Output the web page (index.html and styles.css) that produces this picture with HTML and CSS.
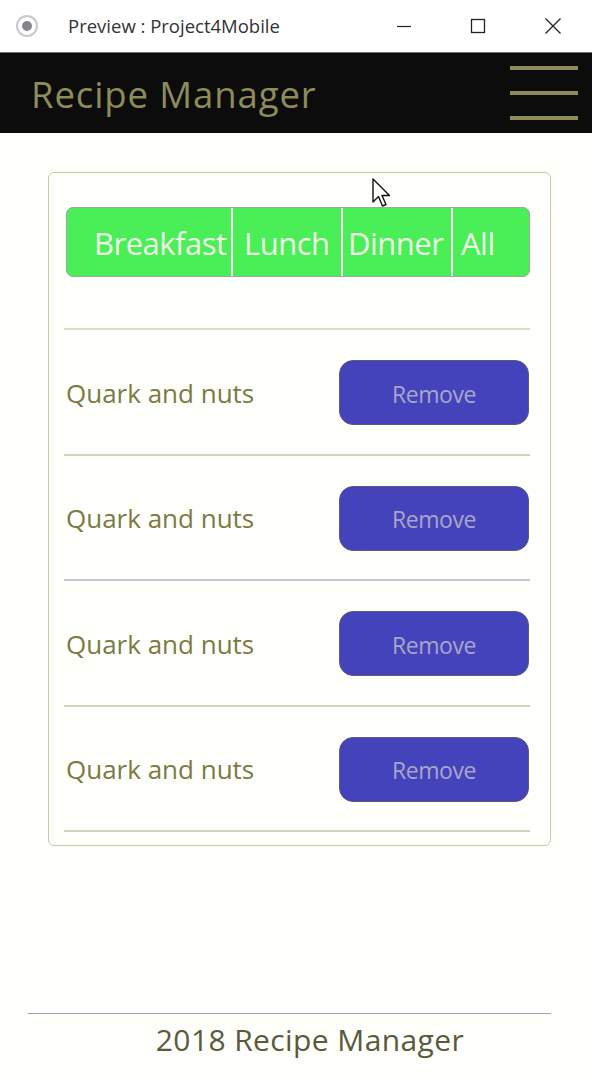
FILE: index.html
```html
<!DOCTYPE html>
<html>
<head>
<meta charset="utf-8">
<link rel="stylesheet" href="styles.css">
</head>
<body>
<div class="window">
  <div class="titlebar">
    <span class="app-icon"><span class="app-dot"></span></span>
    <span class="win-title">Preview : Project4Mobile</span>
    <div class="win-controls">
      <svg class="wc wc-min" width="16" height="16" viewBox="0 0 16 16"><path d="M1 8.5H15" stroke="#222" stroke-width="1.2"/></svg>
      <svg class="wc wc-max" width="16" height="16" viewBox="0 0 16 16"><rect x="1.5" y="1.5" width="13" height="13" fill="none" stroke="#222" stroke-width="1.3"/></svg>
      <svg class="wc wc-close" width="18" height="18" viewBox="0 0 18 18"><path d="M1.5 1.5L16.5 16.5M16.5 1.5L1.5 16.5" stroke="#222" stroke-width="1.3"/></svg>
    </div>
  </div>
  <header class="appbar">
    <h1 class="brand">Recipe Manager</h1>
    <div class="burger"><span></span><span></span><span></span></div>
  </header>
  <main class="content">
    <section class="card">
      <div class="segments">
        <div class="seg seg-breakfast">Breakfast</div>
        <div class="seg seg-lunch">Lunch</div>
        <div class="seg seg-dinner">Dinner</div>
        <div class="seg seg-all">All</div>
      </div>
      <ul class="recipes">
        <li class="recipe"><span class="recipe-name">Quark and nuts</span><button class="remove">Remove</button></li>
        <li class="recipe"><span class="recipe-name">Quark and nuts</span><button class="remove">Remove</button></li>
        <li class="recipe"><span class="recipe-name">Quark and nuts</span><button class="remove">Remove</button></li>
        <li class="recipe"><span class="recipe-name">Quark and nuts</span><button class="remove">Remove</button></li>
      </ul>
    </section>
  </main>
  <footer class="footer">
    <p class="footer-text">2018 Recipe Manager</p>
  </footer>
  <svg class="cursor" width="22" height="32" viewBox="0 0 22 32"><path d="M1 1V24L6.5 18.5L10.5 28L14 26.5L10 17.5H17.5Z" fill="#fff" stroke="#111" stroke-width="1.4" stroke-linejoin="round"/></svg>
</div>
</body>
</html>
```
FILE: styles.css
```css
* { box-sizing: border-box; }
html, body { margin: 0; padding: 0; }
body {
  background: #fefefb;
  font-family: "Open Sans", sans-serif;
}
.window {
  position: relative;
  width: 592px;
  height: 1080px;
  display: flex;
  flex-direction: column;
}
.titlebar {
  height: 52px;
  background: #fff;
  display: flex;
  align-items: center;
  padding-left: 16px;
}
.app-icon {
  width: 22px;
  height: 22px;
  border-radius: 50%;
  border: 2px solid #c8c8d2;
  display: flex;
  align-items: center;
  justify-content: center;
}
.app-dot {
  width: 10px;
  height: 10px;
  border-radius: 50%;
  background: #85858f;
}
.win-title {
  margin-left: 30px;
  font-family: "Open Sans", sans-serif;
  font-size: 18.5px;
  color: #333;
  padding-bottom: 1px;
}
.win-controls {
  margin-left: auto;
  display: flex;
  align-items: center;
  gap: 58px;
  padding-right: 30px;
}
.appbar {
  height: 81px;
  background: #0c0c0c;
  border-top: 1px solid #6f6f6f;
  display: flex;
  align-items: center;
  justify-content: space-between;
  padding: 0 14px 0 31px;
}
.brand {
  margin: 0;
  font-weight: 400;
  font-size: 36.5px;
  letter-spacing: 0.9px;
  color: #8e8c5a;
  padding-top: 2px;
}
.burger {
  width: 68px;
  display: flex;
  flex-direction: column;
  gap: 21px;
}
.burger span {
  display: block;
  height: 4px;
  background: #8e8c5a;
}
.content {
  padding: 39px 41px 0 48px;
}
.card {
  border: 1px solid #c9c9a8;
  border-radius: 6px;
  height: 674px;
  padding: 34px 20px 0 15px;
}
.segments {
  display: flex;
  height: 70px;
  margin-left: 2px;
  background: #4aee57;
  border: 1px solid #9aa89a;
  border-radius: 7px;
  overflow: hidden;
}
.seg {
  color: #eef5e6;
  font-size: 31px;
  letter-spacing: -0.5px;
  display: flex;
  align-items: center;
  white-space: nowrap;
  overflow: hidden;
  padding-top: 2px;
}
.seg + .seg { border-left: 2px solid #f4fff0; }
.seg-breakfast { width: 164px; padding-left: 27px; }
.seg-lunch { width: 110px; padding-left: 11px; }
.seg-dinner { width: 110px; padding-left: 5px; }
.seg-all { flex: 1; padding-left: 8px; }
.recipes {
  list-style: none;
  margin: 51px 0 0 0;
  padding: 0;
  border-top: 2px solid #dcdcc4;
}
.recipe {
  height: 125.5px;
  display: flex;
  align-items: center;
  justify-content: space-between;
  border-bottom: 2px solid #d4d4b8;
  padding-left: 2px;
}
.recipe:nth-child(2) { border-bottom-color: #c8c8d4; }
.recipe-name {
  font-size: 26px;
  color: #7b7a45;
  padding-top: 2px;
}
.remove {
  width: 190px;
  height: 65px;
  border-radius: 14px;
  background: #4543bb;
  border: 1px solid #5a5a70;
  color: #a8a6c8;
  font-family: "Open Sans", sans-serif;
  font-size: 23px;
  letter-spacing: -0.4px;
  margin-right: 1px;
  margin-top: 2px;
  padding-top: 3px;
}
.footer {
  margin-top: auto;
  padding: 0 41px 20px 28px;
}
.footer-text {
  margin: 0;
  border-top: 1px solid #9c9cc0;
  text-align: center;
  font-size: 30px;
  letter-spacing: 0.4px;
  color: #5a5a3c;
  padding-top: 5px;
  padding-left: 41px;
}
.cursor {
  position: absolute;
  left: 372px;
  top: 178px;
}
```
